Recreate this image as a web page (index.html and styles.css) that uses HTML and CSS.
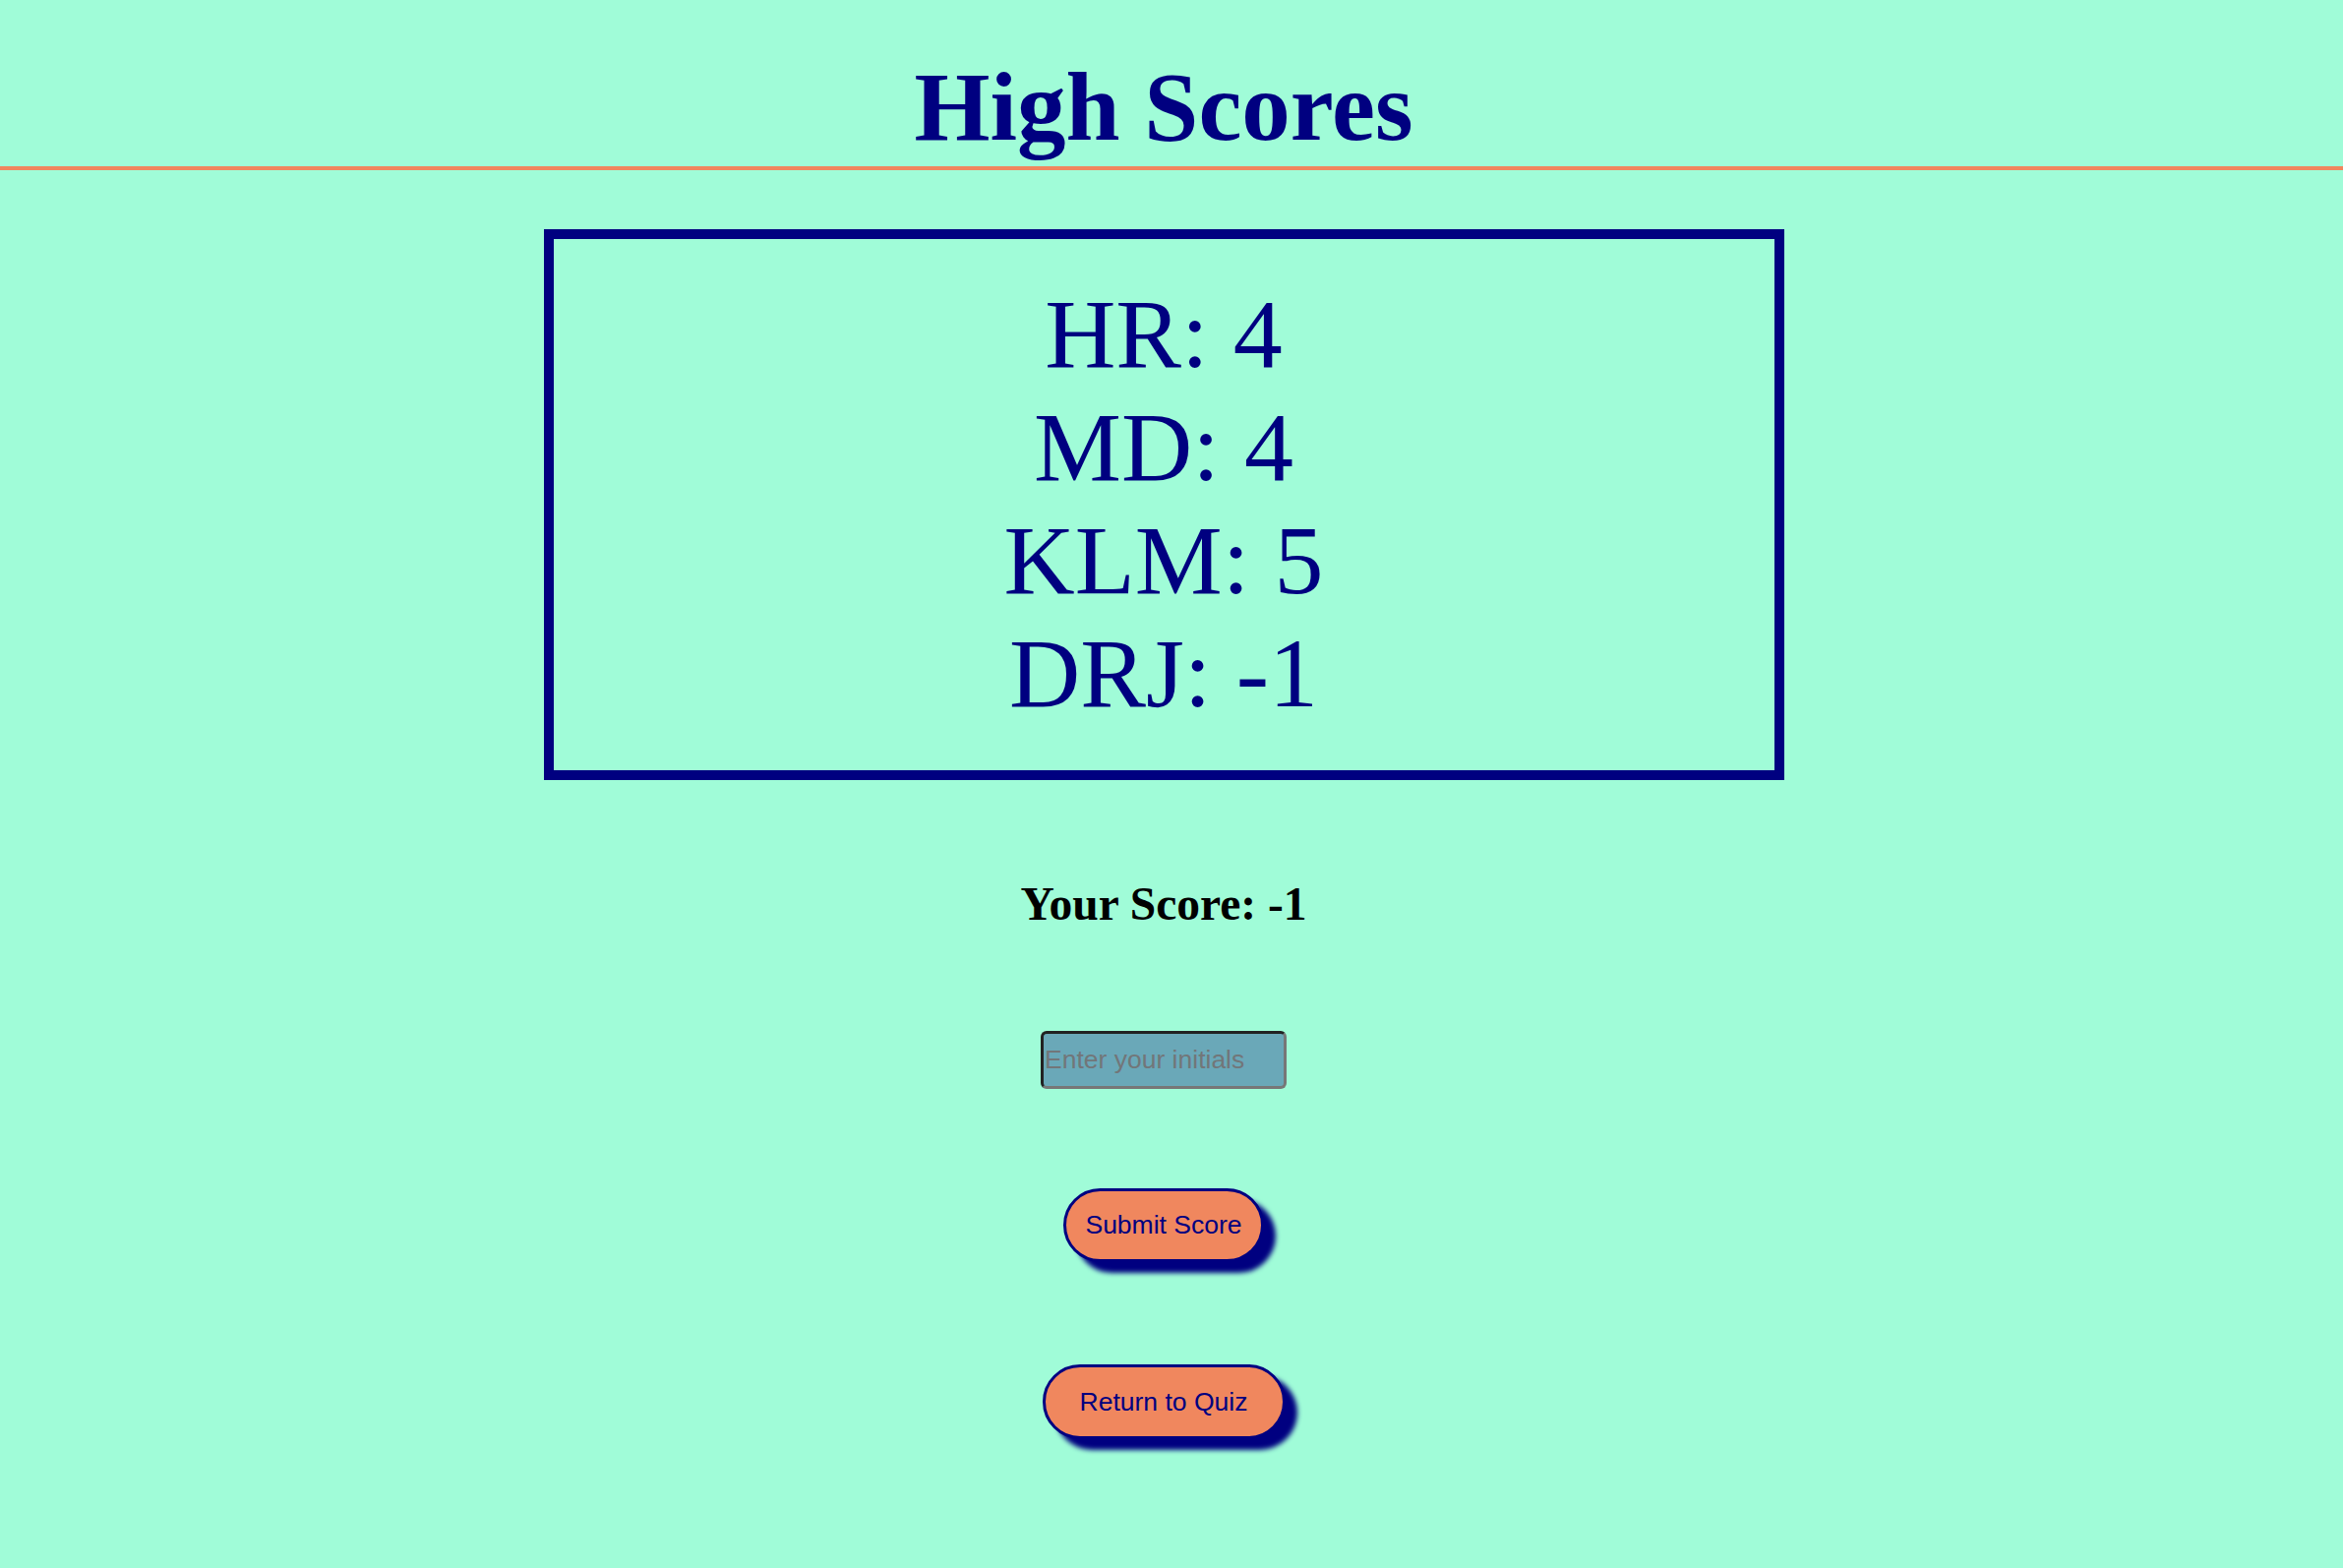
FILE: index.html
```html
<!DOCTYPE html>
<html lang="en">
<head>
<meta charset="utf-8">
<title>High Scores</title>
<link rel="stylesheet" href="styles.css">
</head>
<body>
<header class="header">
  <h1 class="title">High Scores</h1>
</header>
<main class="main">
  <section class="scores">
    <div class="score-line">HR: 4</div>
    <div class="score-line">MD: 4</div>
    <div class="score-line">KLM: 5</div>
    <div class="score-line">DRJ: -1</div>
  </section>
  <h2 class="your-score">Your Score: -1</h2>
  <input class="initials" type="text" placeholder="Enter your initials">
  <button class="btn btn-submit" type="button">Submit Score</button>
  <button class="btn btn-return" type="button">Return to Quiz</button>
</main>
</body>
</html>
```
FILE: styles.css
```css
html, body {
  margin: 0;
  padding: 0;
  background: #a0fcd8;
}
body {
  padding-right: 16px;
  font-family: "Liberation Serif", "Times New Roman", serif;
}
.header {
  padding-top: 52px;
  padding-bottom: 4px;
  border-bottom: 4px solid #f0875e;
  margin-right: -16px;
  padding-right: 16px;
  text-align: center;
}
.title {
  margin: 0;
  font-size: 99px;
  font-weight: bold;
  line-height: normal;
  color: #000080;
}
.main {
  display: flex;
  flex-direction: column;
  align-items: center;
  padding-bottom: 110px;
}
.scores {
  margin-top: 60px;
  width: 1261px;
  box-sizing: border-box;
  border: 10px solid #000080;
  padding: 39px 0 41px;
  display: flex;
  flex-direction: column;
  align-items: center;
  color: #000080;
  font-size: 100px;
  line-height: normal;
}
.score-line {
  white-space: nowrap;
}
.your-score {
  margin: 99px 0 0;
  font-size: 47.5px;
  font-weight: bold;
  line-height: normal;
  color: #000;
}
.initials {
  margin-top: 102px;
  width: 250px;
  height: 59px;
  box-sizing: border-box;
  padding: 0 4px 0 1px;
  border-style: solid;
  border-width: 3px;
  border-color: #222 #777 #777 #222;
  border-radius: 6px;
  background: #6aa8b8;
  font-family: "Liberation Sans", Arial, sans-serif;
  font-size: 26.5px;
  color: #333;
  outline: none;
}
.initials::placeholder {
  color: #727679;
}
.btn {
  box-sizing: border-box;
  height: 75px;
  border: 3px solid #000080;
  border-radius: 40px;
  background: #f0875e;
  color: #000080;
  font-family: "Liberation Sans", Arial, sans-serif;
  font-size: 26.5px;
  box-shadow: 12px 11px 5px #000080;
  white-space: nowrap;
  cursor: pointer;
}
.btn-submit {
  margin-top: 101px;
  width: 204px;
  padding: 0;
}
.btn-return {
  margin-top: 104px;
  width: 247px;
  height: 76px;
  padding: 0;
}
```
